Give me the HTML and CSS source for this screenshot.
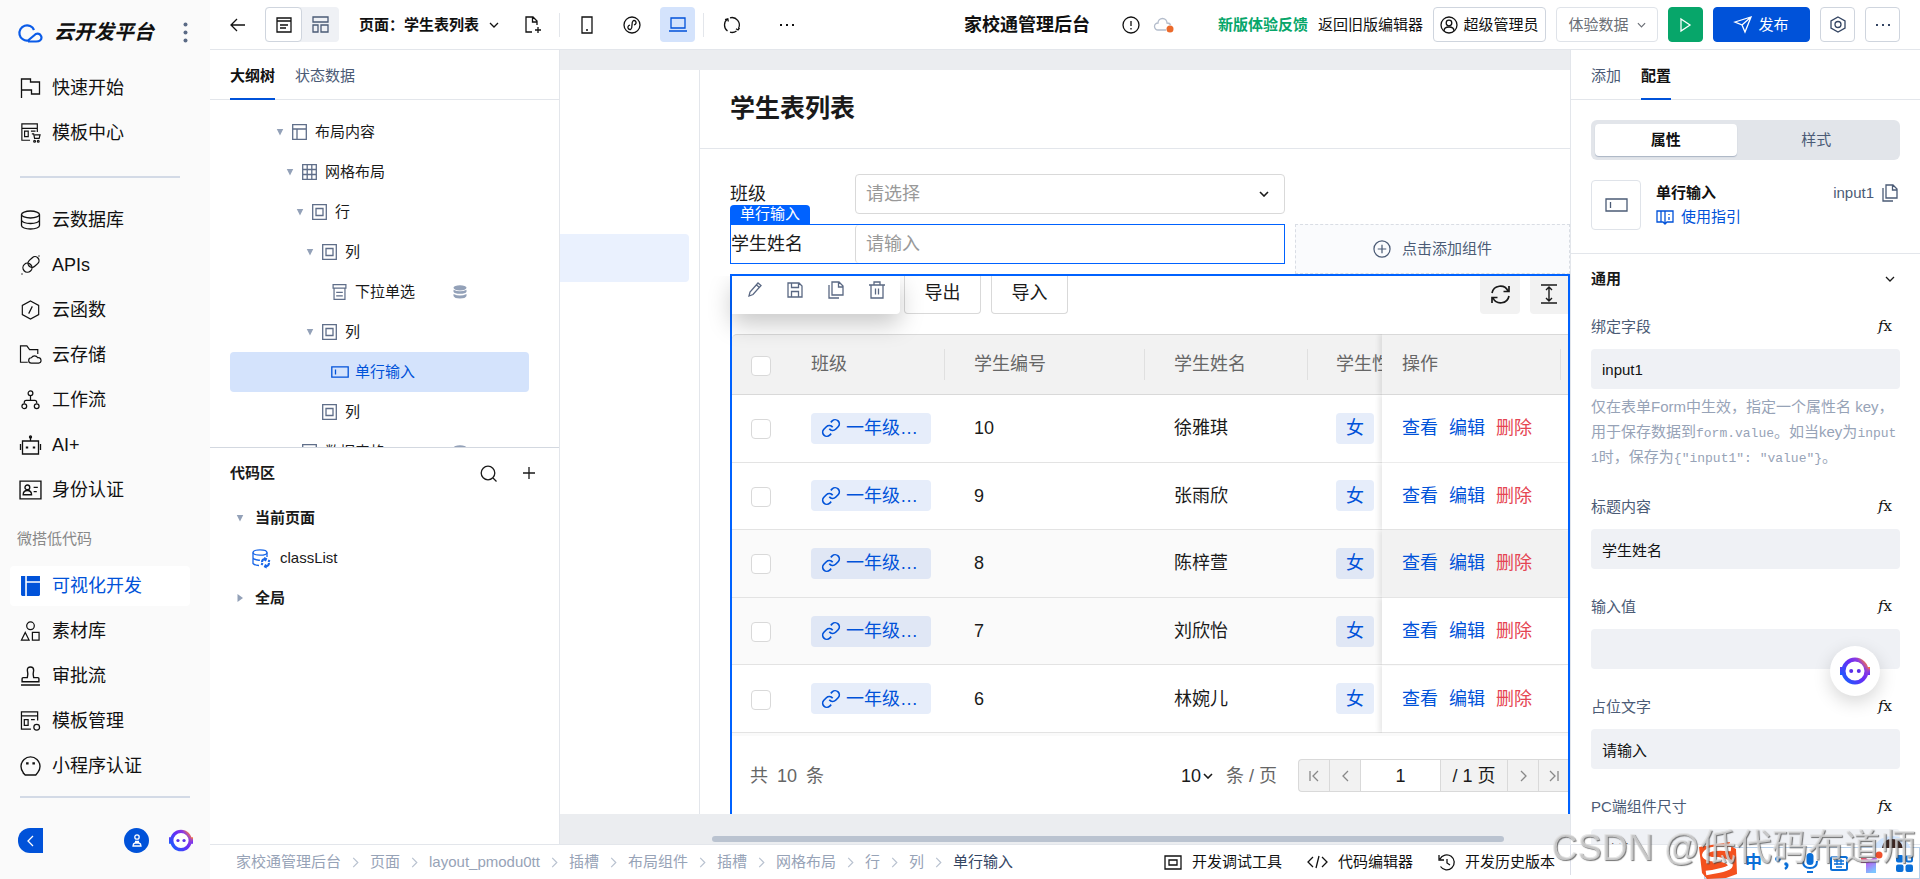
FILE: index.html
```html
<!DOCTYPE html>
<html lang="zh-CN">
<head>
<meta charset="utf-8">
<title>家校通管理后台</title>
<link rel="stylesheet" href="styles.css">
</head>
<body>
<svg class="sprite" aria-hidden="true">
  <defs>
    <linearGradient id="bot-grad" x1="0" y1="0.9" x2="1" y2="0.1">
      <stop offset="0" stop-color="#1a5cff"/><stop offset="0.55" stop-color="#6a2cf5"/><stop offset="0.8" stop-color="#8d3be0"/><stop offset="1" stop-color="#ff7a3c"/>
    </linearGradient>
    <linearGradient id="shirt-grad" x1="0" y1="0" x2="0.6" y2="1">
      <stop offset="0" stop-color="#f0504a"/><stop offset="0.45" stop-color="#b06af5"/><stop offset="1" stop-color="#7cc4ff"/>
    </linearGradient>
  </defs>
  <symbol id="i-flag" viewBox="0 0 20 20"><path d="M1 20V1h9v3h9v12h-8v-4H1"/></symbol>
  <symbol id="i-tpl" viewBox="0 0 21 22"><path d="M10 19H1V1h17v9M1 6h17M4 9h4v6H4zM11 9h5M12 12h2l1 5h5l1-4h-6"/><circle cx="15" cy="20" r="1"/><circle cx="19" cy="20" r="1"/></symbol>
  <symbol id="i-db" viewBox="0 0 20 20"><ellipse cx="10" cy="4.500" rx="9" ry="3.500"/><path d="M1 4.500v11c0 2 4 3.500 9 3.500s9-1.500 9-3.500v-11M1 10c0 2 4 3.500 9 3.500s9-1.500 9-3.500"/></symbol>
  <symbol id="i-api" viewBox="0 0 20 20"><rect x="2" y="8" width="9" height="9" rx="4.500" transform="rotate(-42 7 12)"/><rect x="7" y="3" width="12" height="8" rx="4" transform="rotate(-42 13 7)"/><path d="M1 19h1M18 1h1"/></symbol>
  <symbol id="i-fn" viewBox="0 0 20 22"><path d="M10 1l9 5v10l-9 5-9-5V6zM12 7l-4 8"/></symbol>
  <symbol id="i-store" viewBox="0 0 24 22"><path d="M9 19H1V1h7l3 4h9v5M13 20a3 3 0 0 1 0-6 4 4 0 0 1 7 0 3 3 0 0 1 1 6z"/></symbol>
  <symbol id="i-flow" viewBox="0 0 20 21"><circle cx="10" cy="3.500" r="2.500"/><circle cx="3.500" cy="17" r="2.500"/><circle cx="16.500" cy="17" r="2.500"/><path d="M10 6v5M3.500 14v-1q0-2 2-2h9q2 0 2 2v1"/></symbol>
  <symbol id="i-ai" viewBox="0 0 22 20"><path d="M3 6h16v13H3zM11 6V2M1 9v6M21 9v6"/><circle cx="11" cy="2" r="1"/><path d="M7.500 11.500v2M14.500 11.500v2" stroke-width="2.400"/></symbol>
  <symbol id="i-id" viewBox="0 0 22 19"><path d="M1 1h20v17H1zM14 7h4M14 11h3"/><circle cx="8" cy="7" r="2.300"/><path d="M4 14q0-4 4-4t4 4z"/></symbol>
  <symbol id="i-vis" viewBox="0 0 18 19"><path d="M0 0h4v19H1l-1-1zM5.500 0H18v5H5.500zM5.500 6.500H18V18l-1 1H5.500z" fill="currentColor" stroke="none"/></symbol>
  <symbol id="i-mat" viewBox="0 0 20 21"><circle cx="10" cy="5" r="4"/><path d="M4.500 12l4 8h-8zM12 12h7v8h-7z"/></symbol>
  <symbol id="i-stamp" viewBox="0 0 18 19"><path d="M0 18h18M1 15v-3q0-1 1-1h4q1-3 0-7 0-3 3-3t3 3q-1 4 0 7h4q1 0 1 1v3z"/></symbol>
  <symbol id="i-tplm" viewBox="0 0 21 21"><path d="M11 19H1V1h17v9M1 5h17M4 9h4v6H4zM11 9h4"/><circle cx="17" cy="17" r="3"/></symbol>
  <symbol id="i-face" viewBox="0 0 20 19"><path d="M3 15.500A9 9 0 1 1 17 15.500L15 18H5L3 16z"/><path d="M7 6v2M13 6v2" stroke-width="2.400"/></symbol>
  <symbol id="i-bot" viewBox="0 0 30 28"><path d="M0 10h4v8H0zM26 10h4v8h-4z" fill="url(#bot-grad)" stroke="none"/><circle cx="15" cy="14" r="11.500" fill="#fff" stroke="url(#bot-grad)" stroke-width="4"/><circle cx="11.200" cy="14" r="2" fill="#5a2fe8" stroke="none"/><circle cx="18.800" cy="14" r="2" fill="#5a2fe8" stroke="none"/></symbol>
  <symbol id="i-down" viewBox="0 0 10 6"><path d="M1 1l4 4 4-4"/></symbol>
  <symbol id="i-right" viewBox="0 0 7 12"><path d="M1 1l5 5-5 5"/></symbol>
  <symbol id="i-left" viewBox="0 0 7 12"><path d="M6 1L1 6l5 5"/></symbol>
  <symbol id="i-dots" viewBox="0 0 16 4"><path d="M1 1h2v2H1zM7 1h2v2H7zM13 1h2v2h-2z" fill="currentColor" stroke="none"/></symbol>
  <symbol id="i-layout" viewBox="0 0 15 16"><path d="M.7.700h13.600v14.600H.7zM.7 5h13.600M5 5v10"/></symbol>
  <symbol id="i-grid" viewBox="0 0 15 16"><path d="M.7.700h13.600v14.600H.7zM.7 5.500h13.600M.7 10.500h13.600M5.200 1v14M9.800 1v14"/></symbol>
  <symbol id="i-box" viewBox="0 0 15 16"><path d="M.7.700h13.600v14.600H.7zM4 4.500h7v7H4z"/></symbol>
  <symbol id="i-sel" viewBox="0 0 15 17"><path d="M.7.700h13.600v3.600H.7zM1.700 5v11.300h11.600V5M4 9h7M4 12.500h7"/></symbol>
  <symbol id="i-inp" viewBox="0 0 18 12"><path d="M.8.800h16.400v10.400H.8zM4.500 3.500v5"/></symbol>
  <symbol id="i-dbs" viewBox="0 0 14 14"><g fill="currentColor" stroke="none"><ellipse cx="7" cy="2.800" rx="6.500" ry="2.600"/><path d="M.5 4.800q6.500 3 13 0v2q-1 2-6.500 2T.5 6.800zM.5 9q6.500 3 13 0v2q-1 2.500-6.500 2.500T.5 11z"/></g></symbol>
  <symbol id="i-copy" viewBox="0 0 16 18"><path d="M4 1h7l4 4v9H4zM10.500 1v5H15M1 4v13h10"/></symbol>
  <symbol id="i-link" viewBox="0 0 24 24"><path d="M10 13a5 5 0 0 0 7.540.540l3-3a5 5 0 0 0-7.070-7.070l-1.720 1.710M14 11a5 5 0 0 0-7.540-.540l-3 3a5 5 0 0 0 7.070 7.070l1.710-1.710"/></symbol>
</svg>

<div class="shell">
  <aside class="sidebar">
    <div class="brand">
      <svg class="brand-logo" viewBox="0 0 26 21"><path d="M17 8A7.600 7.600 0 1 0 11 18.500L17 13.500Q20 10.500 23 12.500 26 16 23 18.500 22 19.500 19 19.500H11"/></svg>
      <span class="brand-name">云开发平台</span>
      <button class="plain brand-more" aria-label="更多"><svg width="5" height="21" viewBox="0 0 5 21"><g fill="currentColor" stroke="none"><circle cx="2.500" cy="2.500" r="2"/><circle cx="2.500" cy="10.500" r="2"/><circle cx="2.500" cy="18.500" r="2"/></g></svg></button>
    </div>
    <nav class="nav">
      <a href="#"><svg><use href="#i-flag"/></svg>快速开始</a>
      <a href="#"><svg><use href="#i-tpl"/></svg>模板中心</a>
      <hr>
      <a href="#"><svg><use href="#i-db"/></svg>云数据库</a>
      <a href="#"><svg><use href="#i-api"/></svg>APIs</a>
      <a href="#"><svg><use href="#i-fn"/></svg>云函数</a>
      <a href="#"><svg><use href="#i-store"/></svg>云存储</a>
      <a href="#"><svg><use href="#i-flow"/></svg>工作流</a>
      <a href="#"><svg><use href="#i-ai"/></svg>AI+</a>
      <a href="#"><svg><use href="#i-id"/></svg>身份认证</a>
      <p class="nav-title">微搭低代码</p>
      <a href="#" class="active"><svg><use href="#i-vis"/></svg>可视化开发</a>
      <a href="#"><svg><use href="#i-mat"/></svg>素材库</a>
      <a href="#"><svg><use href="#i-stamp"/></svg>审批流</a>
      <a href="#"><svg><use href="#i-tplm"/></svg>模板管理</a>
      <a href="#"><svg><use href="#i-face"/></svg>小程序认证</a>
    </nav>
    <div class="side-foot">
      <button class="plain collapse" aria-label="收起"><svg width="7" height="12"><use href="#i-left"/></svg></button>
      <button class="plain user" aria-label="用户"><svg width="10" height="13" viewBox="0 0 10 13"><circle cx="5" cy="3" r="2.200"/><path d="M1 12q0-2.500 2-3h4q2 .5 2 3zM3 7.500h4"/></svg></button>
      <button class="plain bot" aria-label="助手"><svg width="24" height="23"><use href="#i-bot"/></svg></button>
    </div>
  </aside>

  <div class="app">
    <header class="topbar">
      <button class="plain" aria-label="返回"><svg width="15" height="14" viewBox="0 0 15 14"><path d="M15 7H1M7 1L1 7l6 6"/></svg></button>
      <div class="view-toggle">
        <button class="on" aria-label="页面"><svg width="16" height="16" viewBox="0 0 16 16"><path d="M1 1h14v14H1zM1 4h14M4 8h8M4 11h6"/></svg></button>
        <button aria-label="布局"><svg width="17" height="17" viewBox="0 0 17 17"><path d="M1 1h15v5H1zM1 9h5v7H1zM9 9h7v7H9z"/></svg></button>
      </div>
      <button class="plain page-name">页面：学生表列表<svg width="10" height="6"><use href="#i-down"/></svg></button>
      <button class="plain new-page" aria-label="新建页面"><svg width="17" height="18" viewBox="0 0 17 18"><path d="M7 16H1V1h7l4 4v4M7.500 1v5H12M13 11v6M10 14h6"/></svg></button>
      <span class="vline"></span>
      <button class="plain phone" aria-label="手机"><svg width="12" height="18" viewBox="0 0 12 18"><path d="M1 1h10v16H1zM5 14h2"/></svg></button>
      <button class="plain mini" aria-label="小程序"><svg width="18" height="18" viewBox="0 0 18 18"><circle cx="9" cy="9" r="8"/><path d="M11 9q2.500-.8 2-3-.8-2-2.800-1.300Q9 5.500 9 9t-1.200 4.300q-2 .7-2.800-1.300-.5-2.200 2-3"/></svg></button>
      <button class="plain desk on" aria-label="电脑"><svg width="18" height="15" viewBox="0 0 18 15"><path d="M2 1h14v10H2zM0 14h18"/></svg></button>
      <span class="vline"></span>
      <button class="plain sync" aria-label="刷新"><svg width="18" height="18" viewBox="0 0 18 18"><path d="M4.500 15A7.500 7.500 0 0 1 4.500 3M7 1.800A7.500 7.500 0 0 1 15.500 12.500M13.500 15A7.500 7.500 0 0 1 7 16.200M2 3.500l2.800-.8.500 2.800M16.500 12l-1.500 2-2-1.200"/></svg></button>
      <button class="plain more" aria-label="更多"><svg width="16" height="4"><use href="#i-dots"/></svg></button>

      <div class="app-title">
        <h1>家校通管理后台</h1>
        <svg class="info" width="18" height="18" viewBox="0 0 18 18"><circle cx="9" cy="9" r="8"/><path d="M9 5v5M9 12v1.500"/></svg>
        <svg class="cloud" width="20" height="16" viewBox="0 0 20 16"><path d="M12 13H4a3.500 3.500 0 0 1 0-7 4.500 4.500 0 0 1 9 0q3 0 3.500 2"/><circle cx="16" cy="12" r="3.500" fill="#eb6a2c" stroke="none"/></svg>
      </div>

      <div class="top-actions">
        <a href="#" class="feedback">新版体验反馈</a>
        <a href="#" class="old-editor">返回旧版编辑器</a>
        <button class="box admin"><svg width="18" height="18" viewBox="0 0 18 18"><circle cx="9" cy="9" r="8"/><circle cx="9" cy="7" r="2.800"/><path d="M4 15q0-4 5-4t5 4"/></svg>超级管理员</button>
        <button class="box data">体验数据<svg width="9" height="6"><use href="#i-down"/></svg></button>
        <button class="box run" aria-label="运行"><svg width="11" height="14" viewBox="0 0 11 14"><path d="M1 1l9 6-9 6z"/></svg></button>
        <button class="box publish"><svg width="18" height="17" viewBox="0 0 18 17"><path d="M1 6l16-5-6 15-3-7zM8 9l9-8"/></svg>发布</button>
        <button class="box square" aria-label="设置"><svg width="16" height="17" viewBox="0 0 16 17"><path d="M8 1l7 4v7l-7 4-7-4V5z"/><circle cx="8" cy="8.500" r="3"/></svg></button>
        <button class="box square" aria-label="更多"><svg width="16" height="4"><use href="#i-dots"/></svg></button>
      </div>
    </header>

    <div class="work">
      <section class="outline">
        <div class="tabs"><button class="tab on">大纲树</button><button class="tab">状态数据</button></div>
        <ul class="tree">
          <li style="--level:0"><i class="caret"></i><svg><use href="#i-layout"/></svg>布局内容</li>
          <li style="--level:1"><i class="caret"></i><svg><use href="#i-grid"/></svg>网格布局</li>
          <li style="--level:2"><i class="caret"></i><svg><use href="#i-box"/></svg>行</li>
          <li style="--level:3"><i class="caret"></i><svg><use href="#i-box"/></svg>列</li>
          <li style="--level:4"><i class="caret none"></i><svg><use href="#i-sel"/></svg>下拉单选<svg class="bound"><use href="#i-dbs"/></svg></li>
          <li style="--level:3"><i class="caret"></i><svg><use href="#i-box"/></svg>列</li>
          <li style="--level:4" class="picked"><i class="caret none"></i><svg><use href="#i-inp"/></svg>单行输入</li>
          <li style="--level:3"><i class="caret none"></i><svg><use href="#i-box"/></svg>列</li>
          <li style="--level:1"><i class="caret none"></i><svg><use href="#i-layout"/></svg>数据表格<svg class="bound"><use href="#i-dbs"/></svg></li>
        </ul>
        <div class="code">
          <div class="code-head"><h2>代码区</h2>
            <button class="plain" aria-label="搜索"><svg width="17" height="17" viewBox="0 0 17 17"><circle cx="8" cy="8" r="6.800"/><path d="M13 13l3.500 3.500"/></svg></button>
            <button class="plain" aria-label="添加"><svg width="12" height="12" viewBox="0 0 12 12"><path d="M6 0v12M0 6h12"/></svg></button>
          </div>
          <div class="code-row strong"><i class="caret"></i>当前页面</div>
          <div class="code-row leaf"><svg width="18" height="19" viewBox="0 0 18 19"><ellipse cx="8" cy="3.500" rx="7" ry="2.700"/><path d="M1 3.500v11q2 2 6 2M15 3.500V8M1 9q2 2.500 7 2.200"/><path d="M10 13q0-3 3.500-3M17 14q0 3-3.500 3.500M12 9l2 1-1 2M15 18.500l-2-1 1-2M9.500 16l1-2M17.500 11l-1 2" stroke-width="2"/></svg>classList</div>
          <div class="code-row strong"><i class="caret closed"></i>全局</div>
        </div>
      </section>

      <main class="canvas">
        <div class="page">
          <div class="page-nav"><div class="page-nav-item"></div></div>
          <div class="page-body">
            <h2 class="page-title">学生表列表</h2>
            <div class="filters">
              <div class="field">
                <label for="class">班级</label>
                <span class="select-wrap"><select id="class"><option>请选择</option></select><svg width="10" height="6"><use href="#i-down"/></svg></span>
              </div>
              <div></div>
              <div class="field focus">
                <span class="comp-tag">单行输入</span>
                <label for="sname">学生姓名</label>
                <input id="sname" type="text" placeholder="请输入">
              </div>
              <button class="slot"><svg width="19" height="19" viewBox="0 0 19 19"><circle cx="9.500" cy="9.500" r="8.500"/><path d="M9.500 5v9M5 9.500h9"/></svg>点击添加组件</button>
            </div>
            <section class="datatable">
              <div class="float-tools">
                <button class="plain" aria-label="编辑"><svg width="14" height="15" viewBox="0 0 14 15"><path d="M1 14l1-4 8-9 3 2.500-8 9zM8.500 3l3 2.500"/></svg></button>
                <button class="plain" aria-label="保存"><svg width="16" height="16" viewBox="0 0 16 16"><path d="M1 1h11l3 3v11H1zM4.500 1v4.500h7V1M4.500 15V9.500h7V15"/></svg></button>
                <button class="plain" aria-label="复制"><svg width="16" height="18"><use href="#i-copy"/></svg></button>
                <button class="plain" aria-label="删除"><svg width="16" height="18" viewBox="0 0 16 18"><path d="M0 4h16M2 4v13h12V4M5 4V1h6v3M6.500 7.500v6M9.500 7.500v6"/></svg></button>
              </div>
              <div class="dt-bar">
                <button class="dt-btn">导出</button>
                <button class="dt-btn">导入</button>
                <button class="dt-tool first" aria-label="刷新"><svg width="19" height="19" viewBox="0 0 19 19"><path d="M1 8a8.500 8.500 0 0 1 16-2M18 1v5.500h-5.500M18 11a8.500 8.500 0 0 1-16 2M1 18v-5.500h5.500"/></svg></button>
                <button class="dt-tool" aria-label="行高"><svg width="16" height="20" viewBox="0 0 16 20"><path d="M0 1h16M0 19h16M8 3v14M5 6l3-3 3 3M5 14l3 3 3-3" stroke-width="1.400"/></svg></button>
              </div>
              <table>
                <colgroup><col class="c-check"><col class="c-class"><col class="c-no"><col class="c-name"><col class="c-sex"><col></colgroup>
                <thead><tr><th class="pick"><input type="checkbox" aria-label="全选"></th><th>班级</th><th>学生编号</th><th>学生姓名</th><th>学生性别</th><th class="ops">操作</th></tr></thead>
                <tbody>
                  <tr><td class="pick"><input type="checkbox" aria-label="选择10"></td><td><a href="#" class="chip"><svg width="20" height="20"><use href="#i-link"/></svg>一年级…</a></td><td>10</td><td>徐雅琪</td><td><span class="chip sex">女</span></td><td class="ops"><a href="#">查看</a><a href="#">编辑</a><a href="#" class="del">删除</a></td></tr>
                  <tr><td class="pick"><input type="checkbox" aria-label="选择9"></td><td><a href="#" class="chip"><svg width="20" height="20"><use href="#i-link"/></svg>一年级…</a></td><td>9</td><td>张雨欣</td><td><span class="chip sex">女</span></td><td class="ops"><a href="#">查看</a><a href="#">编辑</a><a href="#" class="del">删除</a></td></tr>
                  <tr class="tint hover"><td class="pick"><input type="checkbox" aria-label="选择8"></td><td><a href="#" class="chip"><svg width="20" height="20"><use href="#i-link"/></svg>一年级…</a></td><td>8</td><td>陈梓萱</td><td><span class="chip sex">女</span></td><td class="ops"><a href="#">查看</a><a href="#">编辑</a><a href="#" class="del">删除</a></td></tr>
                  <tr class="tint"><td class="pick"><input type="checkbox" aria-label="选择7"></td><td><a href="#" class="chip"><svg width="20" height="20"><use href="#i-link"/></svg>一年级…</a></td><td>7</td><td>刘欣怡</td><td><span class="chip sex">女</span></td><td class="ops"><a href="#">查看</a><a href="#">编辑</a><a href="#" class="del">删除</a></td></tr>
                  <tr><td class="pick"><input type="checkbox" aria-label="选择6"></td><td><a href="#" class="chip"><svg width="20" height="20"><use href="#i-link"/></svg>一年级…</a></td><td>6</td><td>林婉儿</td><td><span class="chip sex">女</span></td><td class="ops"><a href="#">查看</a><a href="#">编辑</a><a href="#" class="del">删除</a></td></tr>
                </tbody>
              </table>
              <div class="row-peek"></div>
              <div class="pagination">
                <span class="total">共&ensp;10&ensp;条</span>
                <span class="size"><select aria-label="每页条数"><option>10</option></select><svg width="10" height="6"><use href="#i-down"/></svg></span>
                <span class="unit">条 / 页</span>
                <div class="pager">
                  <button aria-label="首页"><svg width="10" height="12" viewBox="0 0 10 12"><path d="M1 1v10M9 1L4 6l5 5"/></svg></button>
                  <button aria-label="上一页"><svg width="7" height="12"><use href="#i-left"/></svg></button>
                  <input type="text" value="1" aria-label="页码">
                  <span>/ 1 页</span>
                  <button aria-label="下一页"><svg width="7" height="12"><use href="#i-right"/></svg></button>
                  <button aria-label="末页"><svg width="10" height="12" viewBox="0 0 10 12"><path d="M9 1v10M1 1l5 5-5 5"/></svg></button>
                </div>
              </div>
            </section>
          </div>
        </div>
        <div class="hscroll"><div class="thumb"></div></div>
      </main>

      <aside class="config">
        <div class="tabs"><button class="tab">添加</button><button class="tab on">配置</button></div>
        <div class="segment"><button class="on">属性</button><button>样式</button></div>
        <div class="comp">
          <div class="comp-icon"><svg width="23" height="14" viewBox="0 0 23 14"><path d="M1 1h21v12H1zM5.500 4v6"/></svg></div>
          <div class="comp-info">
            <div class="comp-line"><b>单行输入</b><span class="comp-id">input1<svg width="16" height="18"><use href="#i-copy"/></svg></span></div>
            <a href="#"><svg width="18" height="16" viewBox="0 0 18 16"><path d="M9 2H1v11h6l2 2 2-2h6V2H9v13M5 2v11M13 5v1M13 8v3"/></svg>使用指引</a>
          </div>
        </div>
        <div class="group-head"><h2>通用</h2><svg width="10" height="6"><use href="#i-down"/></svg></div>
        <div class="prop"><div class="prop-head"><label for="p1">绑定字段</label><button class="fx"><i>f</i>x</button></div><input id="p1" type="text" value="input1">
          <p class="hint">仅在表单Form中生效，指定一个属性名 key，用于保存数据到<code>form.value</code>。如当key为<code>input1</code>时，保存为<code>{"input1": "value"}</code>。</p></div>
        <div class="prop"><div class="prop-head"><label for="p2">标题内容</label><button class="fx"><i>f</i>x</button></div><input id="p2" type="text" value="学生姓名" autofocus></div>
        <div class="prop"><div class="prop-head"><label for="p3">输入值</label><button class="fx"><i>f</i>x</button></div><input id="p3" type="text"></div>
        <div class="prop"><div class="prop-head"><label for="p4">占位文字</label><button class="fx"><i>f</i>x</button></div><input id="p4" type="text" value="请输入"></div>
        <div class="prop"><div class="prop-head"><label for="p5">PC端组件尺寸</label><button class="fx"><i>f</i>x</button></div><input id="p5" type="text" value="默认"></div>
      </aside>
    </div>

    <footer class="statusbar">
      <nav class="crumbs">
        <a href="#">家校通管理后台</a><svg><use href="#i-right"/></svg><a href="#">页面</a><svg><use href="#i-right"/></svg><a href="#">layout_pmodu0tt</a><svg><use href="#i-right"/></svg><a href="#">插槽</a><svg><use href="#i-right"/></svg><a href="#">布局组件</a><svg><use href="#i-right"/></svg><a href="#">插槽</a><svg><use href="#i-right"/></svg><a href="#">网格布局</a><svg><use href="#i-right"/></svg><a href="#">行</a><svg><use href="#i-right"/></svg><a href="#">列</a><svg><use href="#i-right"/></svg><a href="#" class="here">单行输入</a>
      </nav>
      <div class="dev">
        <button class="plain"><svg width="18" height="15" viewBox="0 0 18 15"><path d="M1 1h16v13H1zM5 5h8v5H5z"/></svg>开发调试工具</button>
        <button class="plain"><svg width="21" height="14" viewBox="0 0 21 14"><path d="M6 2L1 7l5 5M15 2l5 5-5 5M12 1L9 13"/></svg>代码编辑器</button>
        <button class="plain"><svg width="17" height="17" viewBox="0 0 17 17"><path d="M2 5a7.500 7.500 0 1 1 .5 7.500M1 1v5h5M9 5v4l3 2"/></svg>开发历史版本</button>
      </div>
      <div class="status-end"></div>
    </footer>
  </div>
</div>

<button class="assistant" aria-label="智能助手"><svg width="30" height="28"><use href="#i-bot"/></svg></button>

<div class="ime">
  <svg class="avatar" width="38" height="12" viewBox="0 0 38 12"><path d="M0 12Q6 0 19 0t19 12z" fill="#cfe4ff" stroke="none"/><path d="M9 12q1-9 10-9t11 9z" fill="#3a2420" stroke="none"/></svg>
  <svg class="sogou" width="38" height="37" viewBox="0 0 38 37"><path d="M0 5L31 0l-1 3 7 4 1 25-11 4-19 1L3 31z" fill="#f4511e" stroke="none"/><path d="M32 7Q12 5 7 10t5 7q15 0 19 5T7 31" stroke="#fff" stroke-width="4.500"/></svg>
  <span class="ime-lang">中</span>
  <svg width="14" height="14" viewBox="0 0 14 14"><circle cx="3" cy="3" r="2" stroke-width="1.800"/><path d="M12 8q1 3-2 5" stroke-width="2.500"/><circle cx="11" cy="8" r="1.800" fill="currentColor" stroke="none"/></svg>
  <svg width="16" height="20" viewBox="0 0 16 20"><rect x="4.500" y="0" width="7" height="12" rx="3.500" fill="currentColor" stroke="none"/><path d="M1 8q0 7 7 7t7-7M5 19h6" stroke-width="2"/></svg>
  <svg width="18" height="15" viewBox="0 0 18 15"><rect x="1" y="1" width="16" height="13" rx="1.500" stroke-width="2"/><path d="M4 5h10M4 8h10M6 11h6M7 3v6M11 3v6"/></svg>
  <svg width="22" height="22" viewBox="0 0 22 22"><path d="M0 6h5q3 3 7 0h4l-1 5v10H5V11H0z" fill="url(#shirt-grad)" stroke="none"/><circle cx="18" cy="3" r="3.500" fill="#f0502c" stroke="none"/></svg>
  <svg width="17" height="17" viewBox="0 0 17 17"><g fill="currentColor" stroke="none"><rect width="7.500" height="7.500" rx="2"/><rect y="9.500" width="7.500" height="7.500" rx="2"/><rect x="9.500" y="9.500" width="7.500" height="7.500" rx="2"/></g><rect x="10.500" y="1" width="5.500" height="5.500" rx="1.500" stroke-width="2"/></svg>
</div>
<div class="watermark">CSDN @低代码布道师</div>
</body>
</html>
```

FILE: styles.css
```css
* { box-sizing: border-box; }
html, body { height: 100%; }
body {
  margin: 0;
  overflow: hidden;
  background: #fff;
  color: #1a1a1a;
  font-family: "Liberation Sans", "Noto Sans CJK SC", sans-serif;
  font-size: 15px;
  line-height: 20px;
}
h1, h2, p, ul { margin: 0; padding: 0; }
ul { list-style: none; }
a { color: inherit; text-decoration: none; }
button, input, select { font: inherit; color: inherit; padding: 0; margin: 0; outline: 0; }
button { cursor: pointer; white-space: nowrap; }
select { appearance: none; border: 0; background: transparent; }
svg { fill: none; stroke: currentColor; stroke-width: 1.3; flex: none; display: block; overflow: visible; }
.sprite { position: absolute; width: 0; height: 0; }
.plain { display: flex; align-items: center; justify-content: center; border: 0; background: none; }

.shell { display: flex; height: 100%; }

/* Sidebar */
.sidebar { flex: none; width: 210px; display: flex; flex-direction: column; background: #fafafa; }
.brand { display: flex; align-items: center; height: 64px; padding: 0 22px 0 17px; }
.brand-logo { width: 26px; height: 21px; color: #0a5be8; stroke-width: 2.2; }
.brand-name { flex: 1; margin-left: 11px; font-size: 20px; font-weight: 700; font-style: italic; color: #111; }
.brand-more { color: #5a6a85; }
.nav { display: flex; flex-direction: column; gap: 5px; padding: 4px 20px 0 10px; }
.nav a { display: flex; align-items: center; height: 40px; padding-left: 9px; gap: 10px; border-radius: 4px; font-size: 18px; color: #111; }
.nav svg { width: 23px; height: 20px; }
.nav hr { width: 160px; height: 2px; margin: 18px 10px 17px; border: 0; background: #d3dae6; }
.nav-title { padding: 14px 7px 12px; font-size: 15px; color: #888; line-height: 20px; }
.nav a.active { background: #fff; color: #0052d9; }
.side-foot { display: flex; align-items: center; margin: 10px 20px 0; padding-top: 30px; border-top: 2px solid #d3dae6; }
.collapse { width: 25px; height: 25px; margin-left: -2px; border-radius: 12px 0 0 12px; background: #0052d9; color: #fff; stroke-width: 2; }
.user { width: 25px; height: 25px; margin-left: auto; border-radius: 50%; background: #0052d9; color: #fff; }
.bot { margin: 0 -3px 0 20px; }

/* Top bar */
.app { flex: 1; min-width: 0; display: flex; flex-direction: column; }
.topbar { flex: none; display: flex; align-items: center; height: 50px; padding: 0 20px; border-bottom: 1px solid #e3e6eb; color: #111; }
.view-toggle { display: flex; margin-left: 20px; border-radius: 4px; background: #eff1f5; }
.view-toggle button { display: flex; align-items: center; justify-content: center; width: 37px; height: 35px; border: 1px solid transparent; border-radius: 4px; background: none; color: #4b5b76; }
.view-toggle .on { border-color: #cfd5de; background: #fff; color: #111; }
.page-name { margin-left: 20px; gap: 10px; font-weight: 700; }
.new-page { margin: 0 17px 0 26px; }
.vline { width: 1px; height: 24px; background: #e3e6eb; }
.phone { margin-left: 21px; }
.mini { margin-left: 30px; }
.desk { width: 35px; height: 35px; margin: 0 8px 0 19px; border-radius: 4px; }
.desk.on { background: #d4e3fc; color: #0052d9; }
.sync { margin-left: 19px; }
.more { margin-left: 38px; }
.app-title { display: flex; align-items: center; margin: 0 44px 0 auto; }
.app-title h1 { font-size: 18px; line-height: 24px; }
.info { margin-left: 32px; }
.cloud { margin-left: 14px; color: #b3bccb; }
.top-actions { display: flex; align-items: center; gap: 10px; }
.feedback { color: #07a66a; font-weight: 700; }
.box { display: flex; align-items: center; justify-content: center; height: 35px; border: 1px solid #cfd5de; border-radius: 4px; background: #fff; }
.admin { gap: 5px; width: 113px; }
.data { gap: 8px; width: 102px; color: #6b6f76; border-color: #dfe3e9; }
.run { width: 35px; border-color: #07a66a; background: #07a66a; color: #fff; }
.publish { gap: 6px; width: 97px; border-color: #0052d9; background: #0052d9; color: #fff; }
.square { width: 35px; color: #344563; }

/* Outline panel */
.work { flex: 1; min-height: 0; display: flex; }
.tabs { flex: none; display: flex; gap: 20px; height: 50px; padding: 0 20px; border-bottom: 1px solid #e3e6eb; }
.tab { height: 50px; padding-top: 4px; border: 0; border-bottom: 2px solid transparent; background: none; color: #4b5b76; }
.tab.on { border-bottom-color: #0052d9; color: #111; font-weight: 700; }
.outline { flex: none; display: flex; flex-direction: column; width: 350px; border-right: 1px solid #e3e6eb; }
.tree { flex: 0 0 348px; overflow: hidden; padding: 12px 30px 0 20px; border-bottom: 1px solid #d3d8e0; }
.tree li { display: flex; align-items: center; height: 40px; padding: 0 62px 0 calc(45px + 10px * var(--level)); border-radius: 4px; }
.tree li > svg { width: 15px; height: 16px; margin: 0 8px 0 7px; color: #5f6e89; }
.tree li > svg.bound { width: 14px; height: 14px; margin: 0 0 0 auto; color: #93a1b8; }
.caret { flex: none; width: 10px; height: 7px; background: #93a1b8; clip-path: polygon(15% 0, 85% 0, 50% 100%); }
.caret.none { visibility: hidden; }
.caret.closed { height: 8px; clip-path: polygon(25% 0, 80% 50%, 25% 100%); }
.tree .picked { background: #d4e3fc; color: #0052d9; }
.tree .picked > svg { width: 18px; height: 12px; margin: 0 6px; color: #0052d9; }
.code-head { display: flex; align-items: center; gap: 26px; height: 50px; padding: 0 24px 0 20px; }
.code-head h2 { flex: 1; font-size: 15px; line-height: 20px; }
.code-row { display: flex; align-items: center; height: 40px; padding-left: 25px; gap: 10px; }
.code-row.strong { font-weight: 700; }
.code-row.leaf { padding-left: 42px; }
.code-row.leaf svg { color: #1766e8; }

/* Canvas */
.canvas { flex: 1; min-width: 0; display: flex; flex-direction: column; padding-top: 20px; background: #ebedf0; }
.page { flex: 1; min-height: 0; display: flex; background: #fff; }
.page-nav { flex: none; width: 140px; padding-top: 164px; border-right: 1px solid #e3e6eb; }
.page-nav-item { width: 129px; height: 48px; border-radius: 0 4px 4px 0; background: #eaf1fe; }
.page-body { flex: 1; min-width: 0; display: flex; flex-direction: column; overflow: hidden; }
.page-title { flex: none; height: 79px; padding-left: 30px; border-bottom: 1px solid #e3e6eb; font-size: 25px; line-height: 76px; }
.filters { flex: none; display: grid; grid-template-columns: 555px 1fr; column-gap: 10px; row-gap: 10px; margin: 25px 0 0 30px; }
.field { position: relative; display: flex; height: 40px; font-size: 18px; }
.field label { width: 125px; line-height: 40px; }
.select-wrap { position: relative; flex: 1; display: flex; align-items: center; border: 1px solid #d9d9d9; border-radius: 4px; }
.select-wrap select { flex: 1; height: 38px; padding-left: 10px; color: #999; }
.select-wrap svg { margin-right: 15px; margin-left: -25px; stroke-width: 1.6; }
.field.focus { border: 1px solid #0062ff; }
.focus label { width: 124px; line-height: 38px; }
.field input { flex: 1; min-width: 0; padding-left: 10px; border: 0; border-left: 1px solid #d9d9d9; border-radius: 4px; background: transparent; }
.field input::placeholder { color: #999; }
.comp-tag { position: absolute; left: -1px; bottom: 100%; width: 80px; height: 20px; border-radius: 4px 4px 0 0; background: #0062ff; color: #fff; font-size: 15px; line-height: 18px; text-align: center; }
.slot { display: flex; align-items: center; justify-content: center; gap: 11px; height: 50px; border: 1px dashed #d9dde4; background: #fafbfd; color: #4b5b76; }
.slot svg { width: 18px; height: 18px; }

/* Data table */
.datatable { position: relative; flex: 1; min-height: 0; margin-left: 30px; border: 2px solid #0062ff; border-bottom: 0; font-size: 18px; }
.float-tools { position: absolute; top: 0; left: 0; display: flex; align-items: center; gap: 25px; width: 168px; height: 38px; padding: 0 0 11px 16px; border-radius: 0 0 4px 0; background: #fff; box-shadow: 0 10px 24px rgba(0, 0, 0, 0.22); color: #5a6883; z-index: 1; clip-path: inset(0 -50px -50px -30px); }
.dt-bar { display: flex; height: 58px; padding-left: 172px; gap: 10px; align-items: flex-start; }
.dt-btn { width: 77px; height: 38px; border: 1px solid #d9d9d9; border-top: 0; border-radius: 0 0 4px 4px; background: #fff; line-height: 32px; padding-bottom: 4px; }
.dt-tool { display: flex; align-items: center; justify-content: center; width: 38px; height: 38px; border: 0; border-radius: 0 0 0 4px; background: #f2f2f2; }
.dt-tool svg { margin-bottom: 2px; stroke-width: 1.7; }
.dt-tool.first { width: 40px; margin-left: auto; border-radius: 0 0 4px 4px; }
table { width: 100%; height: 399px; table-layout: fixed; border-collapse: separate; border-spacing: 0; }
.c-check { width: 50px; }
.c-class { width: 163px; }
.c-no { width: 200px; }
.c-name { width: 163px; }
.c-sex { width: 74px; }
th, td { padding: 0 0 0 29px; overflow: hidden; white-space: nowrap; text-align: left; }
th { position: relative; height: 61px; padding-bottom: 2px; border-top: 1px solid #d9d9d9; border-bottom: 1px solid #d9d9d9; background: #f2f2f2; color: #666; font-weight: 400; }
th:first-child { border-radius: 5px 0 0 0; }
th:nth-child(n+2):not(:nth-child(5))::after { content: ""; position: absolute; top: 14px; right: 0; width: 1px; height: 31px; background: #e0e0e0; }
th.ops::after { right: 7px !important; }
th:nth-child(5), td:nth-child(5) { padding-left: 28px; }
td { border-bottom: 1px solid #e3e3e3; }
th.pick, td.pick { padding: 2px 0 0 19px; }
th.pick::after { display: none; }
input[type="checkbox"] { appearance: none; display: block; width: 20px; height: 20px; border: 1px solid #d9d9d9; border-radius: 4px; background: #fff; }
.tint td { background: #fafafa; }
.tint .ops { background: #fff; }
.tint.hover .ops { background: #f2f2f2; }
th.ops, td.ops { padding-left: 20px; overflow: visible; box-shadow: -3px 0 5px rgba(0, 0, 0, 0.09); clip-path: inset(0 0 0 -9px); }
.ops a { margin-right: 11px; color: #0052d9; }
.ops .del { color: #e54552; }
.chip { display: inline-flex; align-items: center; gap: 5px; width: 120px; height: 31px; padding-left: 10px; border-radius: 4px; background: #e6edfa; color: #0052d9; vertical-align: middle; }
.chip svg { stroke-width: 2; }
.chip.sex { width: 38px; padding: 0; justify-content: center; }
.tint .chip { background: #e0e7f5; }
.row-peek { height: 3px; background: #fafafa; }
.pagination { display: flex; align-items: center; margin: 23px 0 0 18px; color: #666; }
.size { display: flex; align-items: center; margin-left: auto; color: #1a1a1a; }
.size select { width: 22px; }
.size svg { stroke-width: 1.6; }
.unit { margin: 0 21px 0 13px; }
.pager { display: flex; height: 33px; border: 1px solid #d9d9d9; border-right: 0; border-radius: 4px 0 0 4px; background: #f2f2f2; color: #1a1a1a; }
.pager > * { display: flex; align-items: center; justify-content: center; border: 0; border-right: 1px solid #d9d9d9; background: none; }
.pager button { width: 31px; color: #888; }
.pager button:last-child { width: 29px; border-right: 0; }
.pager input { width: 80px; background: #fff; text-align: center; }
.pager span { width: 67px; }
.hscroll { flex: none; height: 30px; padding: 22px 66px 0 152px; }
.thumb { height: 6px; border-radius: 3px; background: #bac3d0; }

/* Config panel */
.config { flex: none; width: 350px; overflow: hidden; border-left: 1px solid #e3e6eb; }
.segment { display: flex; height: 40px; margin: 20px 20px 0; padding: 4px; border-radius: 6px; background: #e2e5ea; }
.segment button { flex: 9; border: 0; border-radius: 4px; background: none; color: #4b5b76; }
.segment .on { flex: 8; background: #fff; color: #111; font-weight: 700; box-shadow: 0 1px 1px #aab4c4; }
.comp { display: flex; gap: 15px; padding: 20px 20px 23px; border-bottom: 1px solid #e3e6eb; }
.comp-icon { display: flex; align-items: center; justify-content: center; width: 50px; height: 50px; border: 1px solid #dfe3e9; border-radius: 4px; color: #4b5b76; }
.comp-info { flex: 1; }
.comp-line { display: flex; justify-content: space-between; height: 25px; padding-right: 2px; line-height: 25px; color: #111; }
.comp-id { display: flex; align-items: center; gap: 8px; color: #4b5b76; }
.comp-info a { display: flex; align-items: center; gap: 7px; height: 24px; color: #0052d9; }
.group-head { display: flex; align-items: center; justify-content: space-between; height: 50px; padding: 0 25px 0 20px; }
.group-head h2 { font-size: 15px; line-height: 20px; }
.prop { padding: 12px 20px 15px; }
.prop-head { display: flex; justify-content: space-between; height: 33px; padding-right: 8px; color: #4b5b76; line-height: 22px; }
.fx { height: 20px; border: 0; background: none; color: #111; font-family: "DejaVu Serif", serif; font-size: 15px; line-height: 18px; }
.prop > input { display: block; width: 100%; height: 40px; padding: 0 11px; border: 0; border-radius: 4px; background: #eff1f5; caret-color: #0052d9; color: #111; }
.hint { margin-top: 5px; color: #97a3b7; line-height: 25px; word-break: break-all; }
.hint code { font-family: "Liberation Mono", monospace; font-size: 13px; line-height: 16px; }

/* Status bar */
.statusbar { flex: none; display: flex; height: 35px; border-top: 1px solid #e3e6eb; }
.crumbs { display: flex; align-items: center; gap: 11px; padding-left: 26px; color: #97a3b7; white-space: nowrap; }
.crumbs svg { width: 7px; height: 11px; color: #b9c2d0; }
.crumbs .here { color: #344563; }
.dev { display: flex; gap: 25px; margin-left: auto; margin-right: 15px; color: #111; }
.dev .plain { gap: 10px; }
.status-end { width: 350px; height: 30px; border-left: 1px solid #dcdfe8; }

/* Layers above the editor */
.assistant { position: fixed; right: 40px; bottom: 183px; display: flex; align-items: center; justify-content: center; width: 50px; height: 50px; border: 0; border-radius: 50%; background: #fff; box-shadow: 0 6px 18px rgba(0, 0, 0, 0.16); }
.ime { position: fixed; right: 0; bottom: 0; display: flex; align-items: center; justify-content: space-between; width: 216px; height: 32px; padding: 0 6px 0 40px; border: 1px solid #b8cfe8; background: #fff; color: #0a6fd8; }
.sogou { position: absolute; left: -6px; bottom: -1px; }
.avatar { position: absolute; right: 8px; bottom: 100%; }
.ime-lang { font-size: 17px; font-weight: 700; }
.watermark { position: fixed; right: 4px; bottom: 9px; color: rgba(225, 225, 225, 0.75); font-size: 36px; line-height: 44px; white-space: nowrap; text-shadow: 1px 1px 1px rgba(70, 70, 70, 0.75); pointer-events: none; }
```
